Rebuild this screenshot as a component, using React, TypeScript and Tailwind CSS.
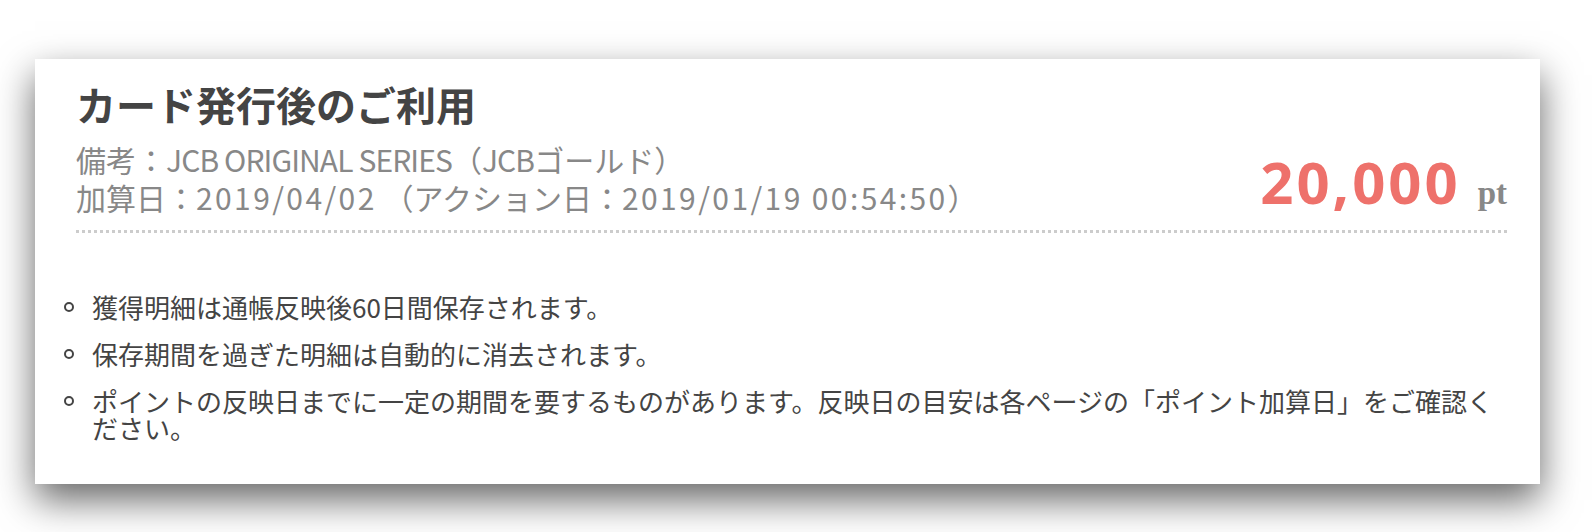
const NOTES = [
  "獲得明細は通帳反映後60日間保存されます。",
  "保存期間を過ぎた明細は自動的に消去されます。",
  "ポイントの反映日までに一定の期間を要するものがあります。反映日の目安は各ページの「ポイント加算日」をご確認ください。",
];

export default function App() {
  return (
    <div className="w-[1592px] h-[532px] overflow-hidden bg-white pt-[59px] pl-[35px] font-['Noto_Sans_CJK_JP',sans-serif]">
      <div className="w-[1505px] h-[425px] bg-white pl-[41px] pr-[33px] pt-[19px] shadow-[0_16px_36px_rgba(0,0,0,0.6)]">
        <div className="flex items-end justify-between border-b-[3px] border-dotted border-[#cccccc] pb-[14px]">
          <div>
            <h1 className="text-[40px] leading-[52px] font-bold text-[#444444] mb-[10px]">カード発行後のご利用</h1>
            <p className="text-[30px] leading-[38px] text-[#888888]">
              備考：<span className="tracking-[-0.03em]">JCB ORIGINAL SERIES</span>（<span className="tracking-[-0.03em]">JCB</span>ゴールド）
            </p>
            <p className="text-[30px] leading-[38px] text-[#888888]">
              加算日：<span className="tracking-[0.08em]">2019/04/02</span> （アクション日：<span className="tracking-[0.08em]">2019/01/19 00:54:50</span>）
            </p>
          </div>
          <div className="flex items-baseline gap-[17px] mb-[5px] leading-none">
            <span className="font-['Open_Sans',sans-serif] font-bold text-[58px] tracking-[3px] text-[#ee716b]">20,000</span>
            <span className="font-['Liberation_Serif',serif] font-bold text-[33px] text-[#888888]">pt</span>
          </div>
        </div>

        <ul className="mt-[60px] -ml-[14px] flex flex-col gap-[20px]">
          {NOTES.map((note) => (
            <li key={note} className="flex text-[26px] leading-[27px] text-[#444444]">
              <span className="w-[30px] h-[27px] shrink-0 flex items-center pl-[2px]">
                <span className="w-[10px] h-[10px] rounded-full border-2 border-[#444444]" />
              </span>
              <span>{note}</span>
            </li>
          ))}
        </ul>
      </div>
    </div>
  );
}
